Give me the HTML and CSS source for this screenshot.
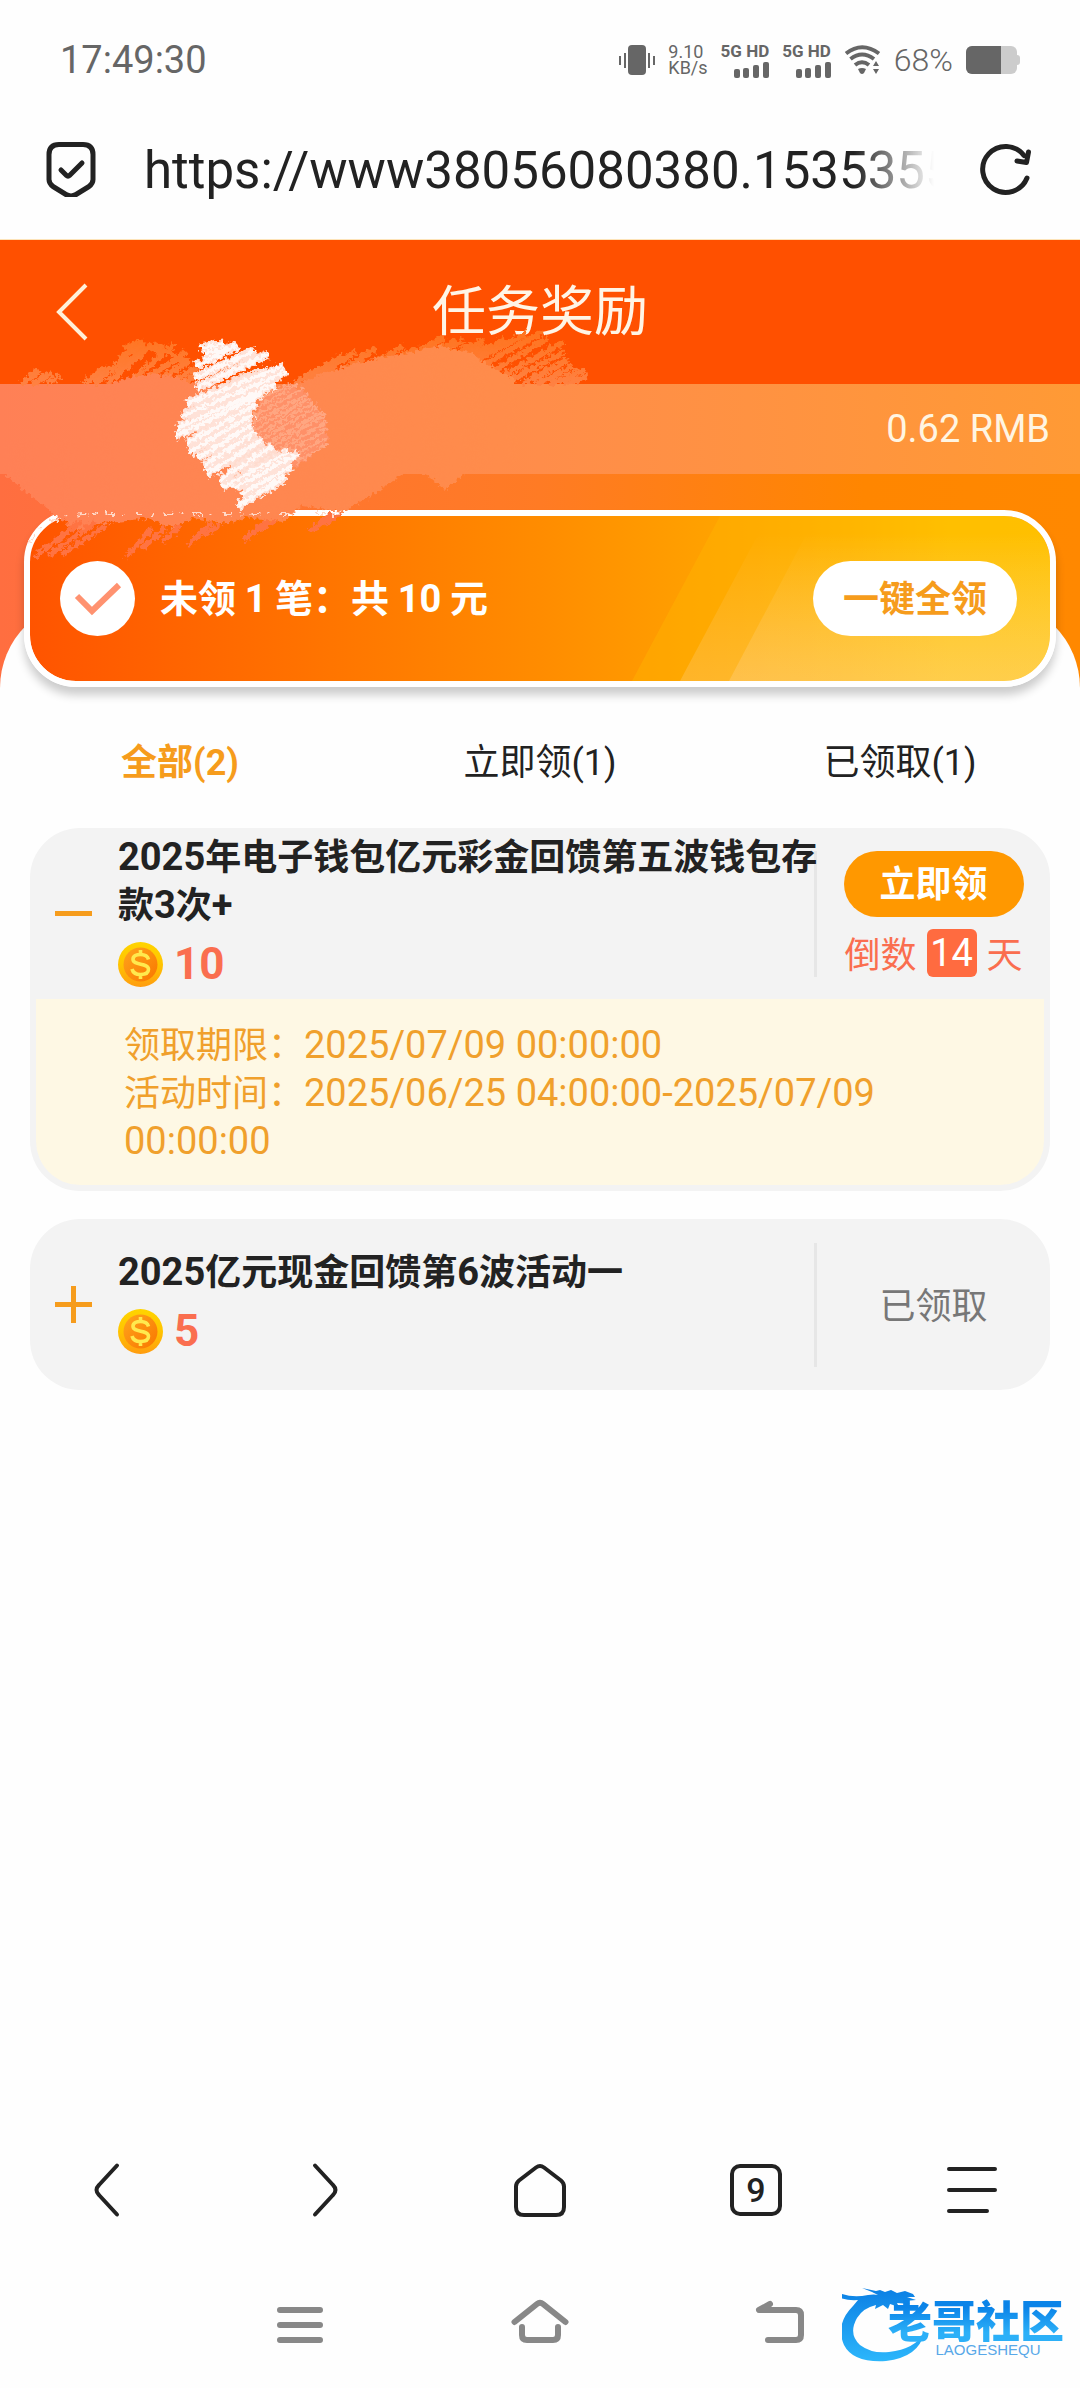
FILE: index.html
```html
<!DOCTYPE html>
<html lang="zh-CN">
<head>
<meta charset="utf-8">
<meta name="viewport" content="width=device-width, initial-scale=1">
<title>任务奖励</title>
<link rel="stylesheet" href="styles.css">
</head>
<body>
<div class="status">
  <span class="clock">17:49:30</span>
  <div class="status-icons">
    <svg width="36" height="32" viewBox="0 0 36 32"><rect x="9" y="1" width="18" height="30" rx="4" fill="#666"/><path d="M1 12v9M6 9v15M30 9v15M35 12v9" stroke="#666" stroke-width="2"/></svg>
    <span class="speed">9.10<br>KB/s</span>
    <span class="signal">5G HD
      <svg width="36" height="16" viewBox="0 0 36 16" fill="#666"><rect x="1" y="7" width="6" height="9" rx="2"/><rect x="10" y="6" width="6" height="10" rx="2"/><rect x="20" y="3" width="6" height="13" rx="2"/><rect x="30" y="0" width="6" height="16" rx="2"/></svg>
    </span>
    <span class="signal">5G HD
      <svg width="36" height="16" viewBox="0 0 36 16" fill="#666"><rect x="1" y="7" width="6" height="9" rx="2"/><rect x="10" y="6" width="6" height="10" rx="2"/><rect x="20" y="3" width="6" height="13" rx="2"/><rect x="30" y="0" width="6" height="16" rx="2"/></svg>
    </span>
    <svg width="37" height="30" viewBox="0 0 37 30"><g fill="none" stroke="#666" stroke-width="4"><path d="M2 8.500Q18 -4 35 8.500"/><path d="M6.500 14Q18 5 30 14"/><path d="M11 20Q18 14.500 25 20"/></g><path d="M14 24q4-2 8 0l-2 4q-2 2-4 0z" fill="#666"/><path d="M29 21l3-5 3 5zM29 24l3 5 3-5z" fill="#666"/></svg>
    <span class="percent">68%</span>
    <svg width="54" height="28" viewBox="0 0 54 28"><rect x="0" y="0" width="51" height="28" rx="6" fill="#ccc"/><path d="M50 9h1a3 3 0 0 1 3 3v4a3 3 0 0 1-3 3h-1z" fill="#ccc"/><path d="M6 0h29v28H6a6 6 0 0 1-6-6V6a6 6 0 0 1 6-6z" fill="#666"/></svg>
  </div>
</div>

<div class="address">
  <svg width="50" height="56" viewBox="0 0 50 56" fill="none" stroke="#222" stroke-width="5" stroke-linejoin="round" stroke-linecap="round"><path d="M13 3.500h24q10 0 10 10v25q0 4-4 7l-13 8q-5 3-10 0l-13-8q-4-3-4-7v-25q0-10 10-10z"/><path d="M15 29l5.500 5.500q1.500 1.500 3 0L36 22"/></svg>
  <input class="url" type="text" readonly aria-label="网址" value="https://www38056080380.1535355535">
  <button class="plain" type="button" aria-label="刷新"><svg width="52" height="52" viewBox="0 0 52 52" fill="none" stroke="#222" stroke-width="5" stroke-linecap="round" stroke-linejoin="round"><path d="M47 35A23 23 0 1 1 44 12.500"/><path d="M48.500 9l-2 10.500-9.500-1.500"/></svg></button>
</div>

<main>
  <div class="top">
    <header class="titlebar">
      <a class="back" href="#" aria-label="返回"><svg width="34" height="58" viewBox="0 0 34 58" fill="none" stroke="#fff0d8" stroke-width="4"><path d="M32 2L5 29l27 27"/></svg></a>
      <h1>任务奖励</h1>
    </header>
    <section class="hero">
      <div class="balance">0.62 RMB</div>
      <div class="banner">
        <svg class="rays" viewBox="0 0 430 165" preserveAspectRatio="none">
          <defs>
            <linearGradient id="ray" x1="0" y1="0" x2="0" y2="1"><stop offset="0.100" stop-color="#fff" stop-opacity="0"/><stop offset="1" stop-color="#ffe8d0" stop-opacity="0.200"/></linearGradient>
          </defs>
          <path d="M100 0h330v165H12z" fill="#ffb400" fill-opacity="0.450"/>
          <path d="M148 0h282v165H60z" fill="url(#ray)"/>
          <path d="M196 0h234v165H109z" fill="url(#ray)"/>
        </svg>
        <svg class="tick" width="75" height="75" viewBox="0 0 75 75"><circle cx="37.500" cy="37.500" r="37.500" fill="#fff"/><path d="M17 35l15 15 27-26" fill="none" stroke="#ff9270" stroke-width="6"/></svg>
        <p class="summary">未领 <span class="num">1</span> 笔：共 <span class="num">10</span> 元</p>
        <button class="claim-all" type="button">一键全领</button>
      </div>
    </section>
    <svg class="scribble" width="620" height="330" viewBox="0 240 620 330" aria-hidden="true">
      <defs>
        <filter id="rough" x="-5%" y="-5%" width="110%" height="110%" color-interpolation-filters="sRGB"><feTurbulence type="fractalNoise" baseFrequency="0.250" numOctaves="3" seed="4"/><feDisplacementMap in="SourceGraphic" scale="9" xChannelSelector="R" yChannelSelector="G"/></filter>
        <linearGradient id="wash" gradientUnits="userSpaceOnUse" x1="0" y1="0" x2="540" y2="0"><stop offset="0" stop-color="#ff8056"/><stop offset="1" stop-color="#ff8d4a"/></linearGradient>
        <linearGradient id="edge" gradientUnits="userSpaceOnUse" x1="0" y1="335" x2="0" y2="384"><stop offset="0" stop-color="#ff741f"/><stop offset="1" stop-color="#ff8142"/></linearGradient>
        <path id="hatch" d="M200 348l24-4M204 354l34-8M196 366l42-21M194 378l62-28M196 388l72-34M186 404l98-38M182 416l104-44M178 428l98-44M176 436l86-42M186 444l70-40M190 452l64-38M198 458l54-34M204 466l50-34M206 474l56-34M220 480l52-34M222 488l66-36M234 488l64-34M242 494l50-28M238 506l46-30M262 492l24-16"/>
      </defs>
      <g filter="url(#rough)" fill="none" stroke="url(#edge)" stroke-width="6">
        <path d="M22 384l18-14M32 384l20-11M46 384l14-8M84 384l24-18M94 384l34-28M106 384l40-34M116 374l30-27M118 360l26-18M124 348l16-6M128 384l46-40M140 384l46-32M154 384l36-24M166 384l30-16M132 354l26-10M180 384l18-10M140 344l22 8M156 346l34 18"/>
        <path d="M294 384l48-28M306 384l50-32M322 384l54-36M336 384l68-38M352 384l64-36M368 384l66-40M386 384l78-44M402 376l82-36M420 372l66-26M438 366l56-20M458 366l48-28M472 362l54-28M482 366l60-34M494 370l54-32M502 376l62-34M510 380l54-28M522 384l46-24M536 384l38-18M550 384l34-14M564 384l24-8M420 350l24-12M440 348l16-8"/>
      </g>
      <g filter="url(#rough)">
        <path fill="url(#wash)" d="M84 390l26-6 18-6 22-4 26 2 22 10h98l24-12 40-12 40-8 40-8 30 6 18 14 26 12 4 84-30 2-22 8-20 18-20-16-14-6-38 26-32 18-40-6-20 16-38-4-16 6-34-6-22 10-24-10-46 6-24 6-20-12L4 474V440H84z"/>
        <path stroke="#ff7342" stroke-width="5" fill="none" d="M36 556l44-34M48 556l48-34M62 554l44-28M126 558l26-30M142 548l24-20M162 542l18-16M188 546l24-24M204 536l16-12M244 540l24-20M260 530l16-10M310 532l22-18M324 524l18-10"/>
        <path stroke="#ffd9c8" stroke-width="2" stroke-dasharray="9 7 3 10" fill="none" d="M30 543Q42 516 84 514H290M316 514h24"/>
      </g>
      <g filter="url(#rough)">
        <path fill="#ff9068" d="M262 396l28-12 18 10 18 28 2 22-34 24-30-18-12-22z"/>
        <path fill="none" stroke="#ffa681" stroke-width="3" d="M262 398l28-14M256 408l42-24M254 416l50-28M252 424l56-30M254 430l56-32M256 436l58-34M260 440l58-34M264 446l58-34M268 450l58-36M276 452l50-30M284 454l42-24M290 458l36-20M296 462l32-18"/>
        <path fill="#ffdccf" d="M210 390l36-18 22-4 12 8-18 16-10 13-2 20 12 15 13 10 15 8-18 14-20 2-20-6-18-14-20-26-4-18z"/>
        <use href="#hatch" fill="none" stroke="#ffe2d8" stroke-width="9"/>
        <use href="#hatch" fill="none" stroke="#fff" stroke-width="4" stroke-opacity="0.800"/>
      </g>
    </svg>
  </div>

  <div class="sheet">
    <nav class="tabs">
      <a class="active" href="#">全部(2)</a>
      <a href="#">立即领(1)</a>
      <a href="#">已领取(1)</a>
    </nav>

    <svg class="sprite" width="0" height="0"><defs>
      <linearGradient id="rim" x1="0" y1="0" x2="0" y2="1"><stop offset="0" stop-color="#ffd400"/><stop offset="0.500" stop-color="#ffc400"/><stop offset="1" stop-color="#ff9c10"/></linearGradient>
      <linearGradient id="face" x1="0" y1="0" x2="1" y2="1"><stop offset="0" stop-color="#ffa51c"/><stop offset="1" stop-color="#f97600"/></linearGradient>
      <symbol id="coin" viewBox="0 0 45 45"><circle cx="22.500" cy="22.500" r="22.500" fill="url(#rim)"/><circle cx="22.500" cy="22.500" r="17" fill="url(#face)"/><path d="M30.500 17.500c-1-4-4-5-8-5s-7.500 1.500-7.500 4.800c0 6.700 15.500 3.200 15.500 10 0 3.700-3.500 5.200-8 5.200s-7.500-1.500-8.500-5.500M22.500 8v5M22.500 32v5" fill="none" stroke="#ffe94e" stroke-width="3.600"/></symbol>
    </defs></svg>

    <article class="card">
      <div class="card-head">
        <button class="toggle" type="button" aria-label="收起" aria-expanded="true"><svg width="37" height="37" viewBox="0 0 37 37"><path d="M0 18.500h37" stroke="#f69c1c" stroke-width="5"/></svg></button>
        <div class="info">
          <h2><span class="num">2025</span>年电子钱包亿元彩金回馈第五波钱包存款<span class="num">3</span>次<span class="num">+</span></h2>
          <p class="amount"><svg width="45" height="45"><use href="#coin"/></svg>10</p>
        </div>
        <div class="side">
          <button class="claim" type="button">立即领</button>
          <p class="countdown">倒数<span class="days">14</span>天</p>
        </div>
      </div>
      <div class="details">
        <p>领取期限：<time class="num">2025/07/09 00:00:00</time></p>
        <p>活动时间：<span class="num">2025/06/25 04:00:00-2025/07/09 00:00:00</span></p>
      </div>
    </article>

    <article class="card">
      <div class="card-head">
        <button class="toggle" type="button" aria-label="展开" aria-expanded="false"><svg width="37" height="37" viewBox="0 0 37 37"><path d="M0 18.500h37M18.500 0v37" stroke="#f69c1c" stroke-width="5"/></svg></button>
        <div class="info">
          <h2><span class="num">2025</span>亿元现金回馈第<span class="num">6</span>波活动一</h2>
          <p class="amount"><svg width="45" height="45"><use href="#coin"/></svg>5</p>
        </div>
        <div class="side"><span class="claimed">已领取</span></div>
      </div>
    </article>
  </div>
</main>

<footer>
  <nav class="bar browser-bar">
    <button class="plain" type="button" aria-label="后退"><svg width="60" height="60" viewBox="0 0 60 60"><path d="M39 5.500L21 25q-5 5 0 10l18 19.500"/></svg></button>
    <button class="plain" type="button" aria-label="前进"><svg width="60" height="60" viewBox="0 0 60 60"><path d="M21 5.500L39 25q5 5 0 10L21 54.500"/></svg></button>
    <button class="plain" type="button" aria-label="主页"><svg width="60" height="60" viewBox="0 0 60 60"><path d="M26 7.500q4-3 8 0l17 13q3 2.500 3 6V47q0 8-8 8H14q-8 0-8-8V26.500q0-3.500 3-6z"/></svg></button>
    <button class="plain" type="button"><span class="tabcount">9</span></button>
    <button class="plain" type="button" aria-label="菜单"><svg width="60" height="60" viewBox="0 0 60 60"><path d="M7 9h46M7 30h46M7 51h38"/></svg></button>
  </nav>
  <nav class="bar system-bar">
    <button class="plain" type="button" aria-label="最近任务"><svg width="60" height="60" viewBox="0 0 60 60"><path d="M10 18h40M10 33h40M10 48h40"/></svg></button>
    <button class="plain" type="button" aria-label="桌面"><svg width="60" height="60" viewBox="0 0 60 60"><path d="M4.500 30L27 12q3-2.500 6 0l22.500 18M12 35v8q0 5 5 5h26q5 0 5-5v-8"/></svg></button>
    <button class="plain" type="button" aria-label="返回"><svg width="60" height="60" viewBox="0 0 60 60"><path d="M20 12L9 18h37q5 0 5 5v20q0 5-5 5H18"/></svg></button>
  </nav>
  <div class="watermark">
    <svg width="96" height="76" viewBox="0 0 96 76"><defs><linearGradient id="dragon" x1="0" y1="0" x2="0" y2="1"><stop offset="0" stop-color="#0b7fe4"/><stop offset="1" stop-color="#2cb6fb"/></linearGradient></defs>
      <path fill="url(#dragon)" d="M0 8q12 4 26 1 6-1 10 0l-6-3-10-4 14 3 4-1 5 2 6-2 6 3 8-2 8 3 2 3-8 0 9 3-11 1 5 3-13-1 2 4-9-3-2 5-5-4-8 4 1-4q-13 3-19 13-9 16 3 27 12 9 29 7 26-3 35-19-5 24-38 28-33 2-42-16-9-21 9-39l5-6q-16 1-26-6z"/></svg>
    <div class="mark-text"><strong>老哥社区</strong><small>LAOGESHEQU</small></div>
  </div>
</footer>
</body>
</html>
```
FILE: styles.css
```css
* { box-sizing: border-box; margin: 0; padding: 0; }

body {
  display: flex;
  flex-direction: column;
  min-height: 100vh;
  background: #fefefe;
  color: #222;
  font-family: "Noto Sans CJK SC", sans-serif;
  font-size: 36px;
  line-height: 48px;
}

a { color: inherit; text-decoration: none; }
button, input { font: inherit; color: inherit; border: 0; background: none; }
svg { display: block; flex: none; }
.num { font-family: Roboto, sans-serif; font-size: 38px; line-height: 38px; }
.plain { display: grid; place-items: center; }

/* phone status bar */
.status {
  display: flex;
  align-items: center;
  justify-content: space-between;
  height: 120px;
  padding: 0 60px;
  color: #666;
  font-family: Roboto, sans-serif;
}
.clock { font-size: 38px; }
.status-icons { display: flex; align-items: center; gap: 13px; }
.speed { font-size: 18px; line-height: 16px; }
.signal {
  display: flex;
  flex-direction: column;
  align-items: flex-end;
  gap: 2px;
  font-size: 17px;
  font-weight: 700;
  line-height: 18px;
}
.percent { font-size: 32px; font-weight: 300; }

/* address bar */
.address {
  display: flex;
  align-items: center;
  height: 120px;
  padding: 0 48px 22px 46px;
  border-bottom: 1px solid #fde3b8;
}
.url {
  flex: 1;
  min-width: 0;
  height: 80px;
  margin: 0 46px 0 48px;
  padding-top: 4px;
  font-family: Roboto, sans-serif;
  font-size: 51px;
  outline: 0;
  -webkit-mask-image: linear-gradient(to left, transparent, #000 80px);
  mask-image: linear-gradient(to left, transparent, #000 80px);
}

main { flex: 1; }

/* orange top */
.top { position: relative; }
.titlebar {
  position: relative;
  display: grid;
  place-items: center;
  height: 144px;
  padding-bottom: 8px;
  background: #ff5000;
  color: #fff5e6;
}
.titlebar h1 { font-size: 54px; font-weight: 400; line-height: 80px; }
.back { position: absolute; left: 54px; top: 43px; }
.hero {
  padding-bottom: 1px;
  background: linear-gradient(to right, #ff6e40, #ff7b24 50%, #ff8600 80%, #ff8800);
}
.balance {
  padding: 21px 30px;
  background: linear-gradient(to right, #ff8056, #ff8d4a 50%, #ff9a35);
  color: #fff5e2;
  font-family: Roboto, sans-serif;
  font-size: 38px;
  text-align: right;
}
.banner {
  position: relative;
  z-index: 2;
  display: flex;
  align-items: center;
  margin: 36px 24px 0;
  padding: 45px 33px 45px 30px;
  border: 6px solid #fff;
  border-radius: 52px;
  background: linear-gradient(to right, #ff5400, #ff8c00 50%, #ffa800 72%, #ffc800 90%, #ffca00) padding-box;
  box-shadow: 0 8px 10px rgba(0, 0, 0, .2);
}
.rays {
  position: absolute;
  right: 0;
  top: 0;
  width: 430px;
  height: 100%;
  border-radius: 0 46px 46px 0;
}
.summary {
  flex: 1;
  padding: 0 0 5px 25px;
  color: #fff;
  font-size: 38px;
  font-weight: 700;
}
.claim-all {
  position: relative;
  width: 204px;
  height: 75px;
  padding-bottom: 6px;
  border-radius: 38px;
  background: #fff;
  color: #f69c1c;
  font-weight: 700;
}
.scribble { position: absolute; left: 0; top: 0; z-index: 3; pointer-events: none; }

/* white sheet */
.sheet {
  position: relative;
  margin-top: -88px;
  padding: 139px 30px 28px;
  border-radius: 88px 88px 0 0;
  background: #fefefe;
}
.tabs {
  display: grid;
  grid-template-columns: repeat(3, 1fr);
  margin: 0 -30px 41px;
  font-family: Roboto, "Noto Sans CJK SC", sans-serif;
  text-align: center;
}
.tabs .active { color: #f69c1c; font-weight: 700; }
.sprite { position: absolute; }

.card {
  margin-bottom: 28px;
  border-radius: 50px;
  background: #f3f3f3;
  overflow: hidden;
}
.card-head {
  display: grid;
  grid-template-columns: 88px 1fr 236px;
  align-items: center;
  min-height: 171px;
}
.toggle { padding-left: 25px; }
.info { position: relative; z-index: 1; padding-bottom: 4px; }
.info h2 { margin-right: -6px; font-size: 36px; font-weight: 700; }
.amount {
  display: flex;
  align-items: center;
  gap: 11px;
  padding-top: 9px;
  color: #fa6e4f;
  font-family: Roboto, sans-serif;
  font-size: 44px;
  font-weight: 700;
  line-height: 58px;
}
.side {
  display: flex;
  flex-direction: column;
  align-items: center;
  justify-content: center;
  gap: 12px;
  min-height: 124px;
  border-left: 3px solid #e6e6e6;
}
.claim {
  width: 180px;
  height: 66px;
  padding-bottom: 6px;
  border-radius: 33px;
  background: #ff9800;
  color: #fff;
  font-weight: 700;
}
.countdown { display: flex; gap: 10px; color: #fa6e4f; line-height: 46px; }
.days {
  width: 50px;
  border-radius: 6px;
  background: #ff6b40;
  color: #fff;
  font-family: Roboto, sans-serif;
  font-size: 38px;
  line-height: 48px;
  text-align: center;
}
.claimed { padding-bottom: 4px; color: #777; }
.details {
  margin: 0 6px 6px;
  padding: 19px 40px 23px 88px;
  border-radius: 0 0 44px 44px;
  background: #fef8e4;
  color: #f0a02c;
}

/* bottom bars */
footer { position: relative; }
.bar { display: grid; height: 132px; }
.bar svg { fill: none; stroke-linecap: round; stroke-linejoin: round; }
.browser-bar { grid-template-columns: repeat(5, 1fr); }
.browser-bar svg { stroke: #222; stroke-width: 4; }
.system-bar { grid-template-columns: repeat(3, 240px); justify-content: center; }
.system-bar svg { stroke: #888; stroke-width: 6; }
.tabcount {
  width: 52px;
  height: 52px;
  border: 4px solid #222;
  border-radius: 10px;
  font-family: Roboto, sans-serif;
  font-size: 34px;
  font-weight: 500;
  line-height: 44px;
}
.watermark { position: absolute; right: 16px; bottom: 22px; width: 222px; height: 80px; }
.mark-text { position: absolute; right: 0; top: 10px; display: grid; justify-items: center; }
.mark-text strong {
  font-size: 44px;
  font-weight: 900;
  line-height: 46px;
  background: linear-gradient(#0b84e8 25%, #2cb0f8 80%);
  -webkit-background-clip: text;
  background-clip: text;
  color: transparent;
}
.mark-text small {
  padding-left: 24px;
  font-family: "Liberation Sans", sans-serif;
  font-size: 15px;
  line-height: 15px;
  color: #58a8e8;
}
```
